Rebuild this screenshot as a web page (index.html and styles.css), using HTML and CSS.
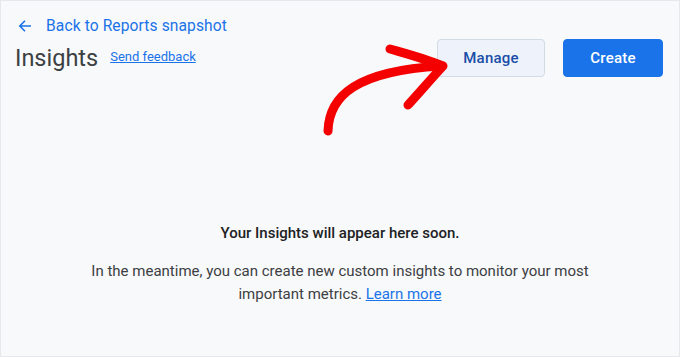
FILE: index.html
```html
<!DOCTYPE html>
<html>
<head>
<meta charset="utf-8">
<link rel="stylesheet" href="styles.css">
</head>
<body>
<div class="page">
  <header class="header">
    <a class="back" href="#">
      <svg class="back-icon" width="16" height="16" viewBox="0 0 16 16"><path d="M14 8H3M8 2.8L2.8 8 8 13.2" fill="none" stroke="#1a73e8" stroke-width="1.6"/></svg>
      <span>Back to Reports snapshot</span>
    </a>
    <div class="title-row">
      <h1 class="title">Insights</h1>
      <a class="feedback" href="#">Send feedback</a>
      <div class="actions">
        <button class="btn btn-manage">Manage</button>
        <button class="btn btn-create">Create</button>
      </div>
    </div>
  </header>
  <main class="empty">
    <p class="empty-title">Your Insights will appear here soon.</p>
    <p class="empty-text">In the meantime, you can create new custom insights to monitor your most important metrics. <a href="#" class="learn">Learn more</a></p>
  </main>
  <svg class="annot" width="140" height="110" viewBox="0 0 140 110">
    <path d="M17 90 C 18 55, 45 30, 130 25" fill="none" stroke="#f40000" stroke-width="9" stroke-linecap="round"/>
    <path d="M79 8 C 100 14, 115 18, 132 25 C 120 38, 108 52, 97 64" fill="none" stroke="#f40000" stroke-width="9" stroke-linecap="round" stroke-linejoin="round"/>
  </svg>
</div>
</body>
</html>
```
FILE: styles.css
```css
* { box-sizing: border-box; }
html, body { margin: 0; padding: 0; }
body {
  font-family: Roboto, "Liberation Sans", sans-serif;
  background: #f8f9fa;
}
.page {
  position: relative;
  width: 680px;
  height: 357px;
  border: 1px solid #e6e8eb;
  background: #f8f9fa;
  overflow: hidden;
}
.header {
  padding: 13px 16px 0 14px;
}
.back {
  display: flex;
  align-items: center;
  gap: 13px;
  height: 24px;
  padding-left: 2px;
  color: #1a73e8;
  font-size: 15.6px;
  text-decoration: none;
  letter-spacing: 0.1px;
}
.back-icon { display: block; }
.title-row {
  display: flex;
  align-items: center;
  height: 38px;
  margin-top: 1px;
}
.title {
  margin: 0;
  font-size: 23.5px;
  font-weight: 400;
  color: #3c4043;
}
.feedback {
  margin-left: 12px;
  font-size: 13px;
  color: #1a73e8;
  margin-top: -3px;
}
.actions {
  margin-left: auto;
  display: flex;
  gap: 18px;
}
.btn {
  height: 38px;
  border-radius: 4px;
  font-family: Roboto, "Liberation Sans", sans-serif;
  font-size: 15px;
  font-weight: 500;
  letter-spacing: 0.2px;
  cursor: pointer;
}
.btn-manage {
  width: 108px;
  background: #eef3fb;
  border: 1px solid #d3dbe6;
  color: #1a4ea8;
}
.btn-create {
  width: 100px;
  background: #1a73e8;
  border: 1px solid #1a73e8;
  color: #fff;
}
.empty {
  text-align: center;
  padding-top: 146px;
}
.empty-title {
  margin: 0;
  font-size: 15px;
  font-weight: 500;
  line-height: 20px;
  color: #202124;
}
.empty-text {
  margin: 17px auto 0;
  width: 540px;
  font-size: 15px;
  line-height: 23px;
  color: #3c4043;
}
.learn { color: #1a73e8; }
.annot {
  position: absolute;
  left: 310px;
  top: 40px;
}
```
